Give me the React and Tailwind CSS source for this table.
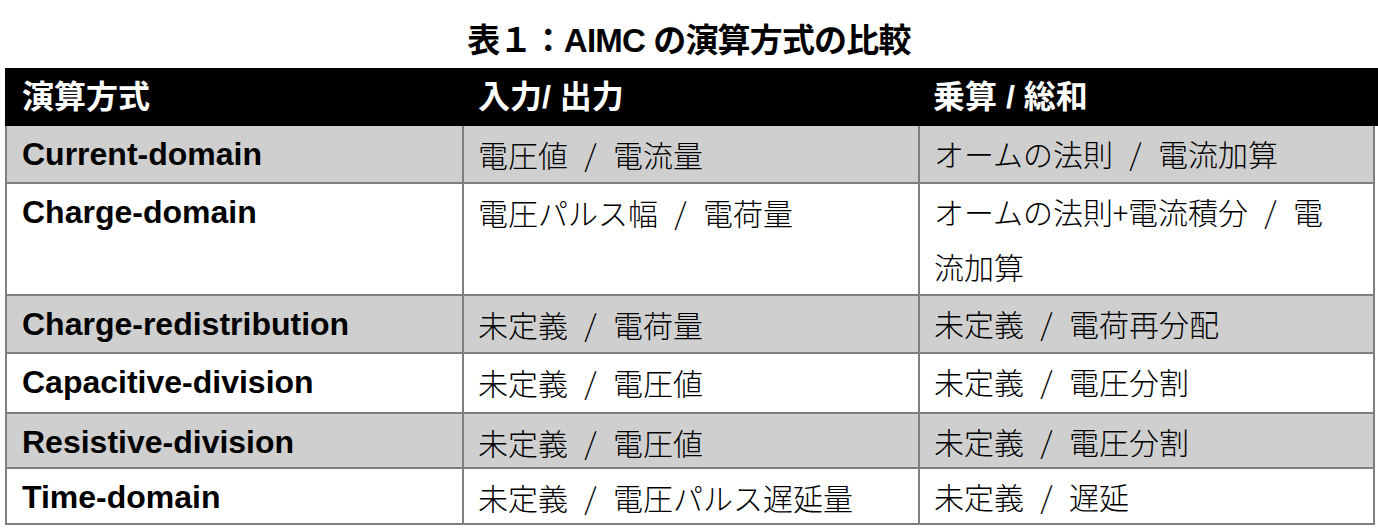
const ROWS = [
  { name: 'Current-domain', io: '電圧値 / 電流量', op: ['オームの法則 / 電流加算'], shaded: true, h: 'h-[58px]' },
  { name: 'Charge-domain', io: '電圧パルス幅 / 電荷量', op: ['オームの法則+電流積分 / 電', '流加算'], shaded: false, h: 'h-[112px]' },
  { name: 'Charge-redistribution', io: '未定義 / 電荷量', op: ['未定義 / 電荷再分配'], shaded: true, h: 'h-[58px]' },
  { name: 'Capacitive-division', io: '未定義 / 電圧値', op: ['未定義 / 電圧分割'], shaded: false, h: 'h-[60px]' },
  { name: 'Resistive-division', io: '未定義 / 電圧値', op: ['未定義 / 電圧分割'], shaded: true, h: 'h-[55px]' },
  { name: 'Time-domain', io: '未定義 / 電圧パルス遅延量', op: ['未定義 / 遅延'], shaded: false, h: 'h-[56px]' },
];

const latin = "font-['Liberation_Sans','Noto_Sans_CJK_JP',sans-serif]";
const jp = "font-['Noto_Sans_CJK_JP',sans-serif] font-light [font-feature-settings:'hwid']";

export default function App() {
  return (
    <div className="w-[1378px] h-[529px] bg-white text-black overflow-hidden">
      {/* Caption */}
      <div className="h-[68px] pt-3 flex items-center justify-center">
        <h1 className={`${latin} font-bold text-[33px] leading-none tracking-tight`}>
          表１：AIMC の演算方式の比較
        </h1>
      </div>

      {/* Header row */}
      <div className={`ml-[5px] h-[58px] bg-black text-white font-bold text-[32px] grid grid-cols-[457px_456px_1fr] items-center ${latin}`}>
        <div className="pl-[17px]">演算方式</div>
        <div className="pl-[16px]">入力/ 出力</div>
        <div className="pl-[15px]">乗算 / 総和</div>
      </div>

      {/* Body */}
      <div className="ml-[5px] w-[1370px] border-x-2 border-[#7f7f7f]">
        {ROWS.map((row) => (
          <div
            key={row.name}
            className={`grid grid-cols-[455px_456px_455px] border-b-2 border-[#7f7f7f] ${row.h} ${
              row.shaded ? 'bg-[#cfcfcf]' : 'bg-white'
            }`}
          >
            <div className={`pl-[15px] font-bold text-[32px] leading-[56px] ${latin}`}>{row.name}</div>
            <div className={`border-l-2 border-[#7f7f7f] pl-[14px] text-[30px] leading-[56px] ${jp}`}>{row.io}</div>
            <div className={`border-l-2 border-[#7f7f7f] pl-[14px] text-[30px] leading-[55px] ${jp}`}>
              {row.op.map((line) => (
                <div key={line} className="whitespace-nowrap">{line}</div>
              ))}
            </div>
          </div>
        ))}
      </div>
    </div>
  );
}
